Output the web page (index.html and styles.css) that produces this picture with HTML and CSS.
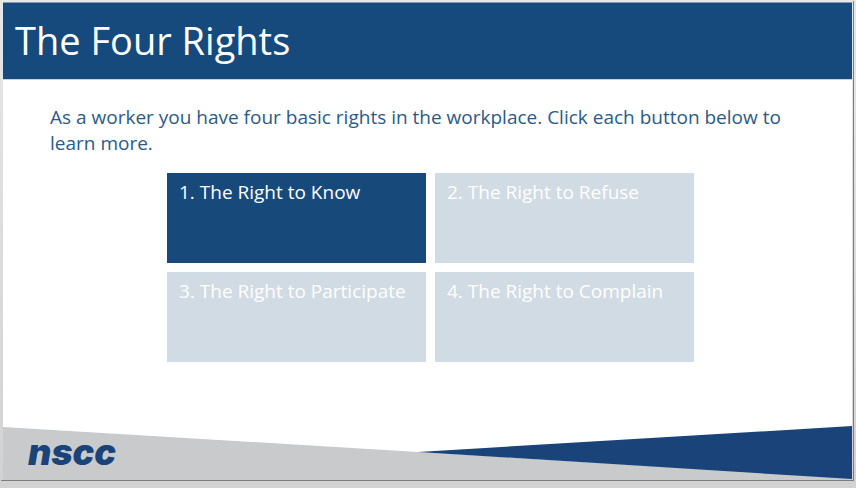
FILE: index.html
```html
<!DOCTYPE html>
<html lang="en">
<head>
<meta charset="utf-8">
<meta name="viewport" content="width=device-width, initial-scale=1">
<title>The Four Rights</title>
<link rel="stylesheet" href="styles.css">
</head>
<body>
<div class="frame">
  <div class="slide">
    <header class="banner"><h1>The Four Rights</h1></header>
    <main class="content">
      <p class="intro">As a worker you have four basic rights in the workplace. Click each button below to learn more.</p>
      <div class="rights">
        <button class="right active" type="button">1. The Right to Know</button>
        <button class="right" type="button">2. The Right to Refuse</button>
        <button class="right" type="button">3. The Right to Participate</button>
        <button class="right" type="button">4. The Right to Complain</button>
      </div>
    </main>
    <footer class="footer">
      <svg class="swoosh" viewBox="0 0 849 54" preserveAspectRatio="none" aria-hidden="true">
        <path fill="#c9cacc" d="M0 1 L415 26 L849 52 V54 H0 Z"/>
        <path fill="#1a4379" d="M415 26 L849 0 V53 Z"/>
      </svg>
      <span class="logo">nscc</span>
    </footer>
  </div>
</div>
</body>
</html>
```
FILE: styles.css
```css
* {
  box-sizing: border-box;
}

body {
  margin: 0;
  min-height: 100vh;
  display: flex;
  flex-direction: column;
  padding: 1px 2px 7px 0;
  background: linear-gradient(#e7e7e7, #d2d2d2);
  font-family: "Open Sans", "Noto Sans", sans-serif;
}

.frame {
  flex: 1;
  display: flex;
  margin-left: 1px;
  padding: 2px 1px 0 2px;
  border-right: 1px solid #7d7d7d;
  border-bottom: 1px solid #7d7d7d;
}

.slide {
  flex: 1;
  display: flex;
  flex-direction: column;
  background: #fff;
}

.banner {
  padding: 11px 12px 13px;
  background: #174a7c;
  box-shadow: 0 -1px #7f9bb8, 0 1px #bfd3e3;
}

.banner h1 {
  margin: 0;
  color: #fff;
  font-size: 38px;
  font-weight: 400;
  line-height: 52px;
}

.content {
  flex: 1;
  padding: 25px 41px 0 47px;
}

.intro {
  margin: 0;
  color: #2c5a88;
  font-size: 19px;
  line-height: 26px;
}

.rights {
  display: grid;
  grid-template-columns: repeat(2, minmax(0, 259px));
  justify-content: center;
  gap: 9px;
  margin-top: 17px;
}

.right {
  display: flex;
  align-items: flex-start;
  height: 90px;
  padding: 6px 12px;
  border: 0;
  background: #d1dbe4;
  color: #fff;
  font: 400 19px/26px "Open Sans", "Noto Sans", sans-serif;
  text-align: left;
  cursor: pointer;
}

.right.active {
  background: #174a7a;
}

.footer {
  display: grid;
  height: 54px;
}

.footer > * {
  grid-area: 1 / 1;
}

.swoosh {
  display: block;
  width: 100%;
  height: 54px;
}

.logo {
  z-index: 1;
  padding: 6px 0 0 25px;
  color: #1a4379;
  font: italic 900 36px/40px Inter, "Liberation Sans", sans-serif;
}
```
